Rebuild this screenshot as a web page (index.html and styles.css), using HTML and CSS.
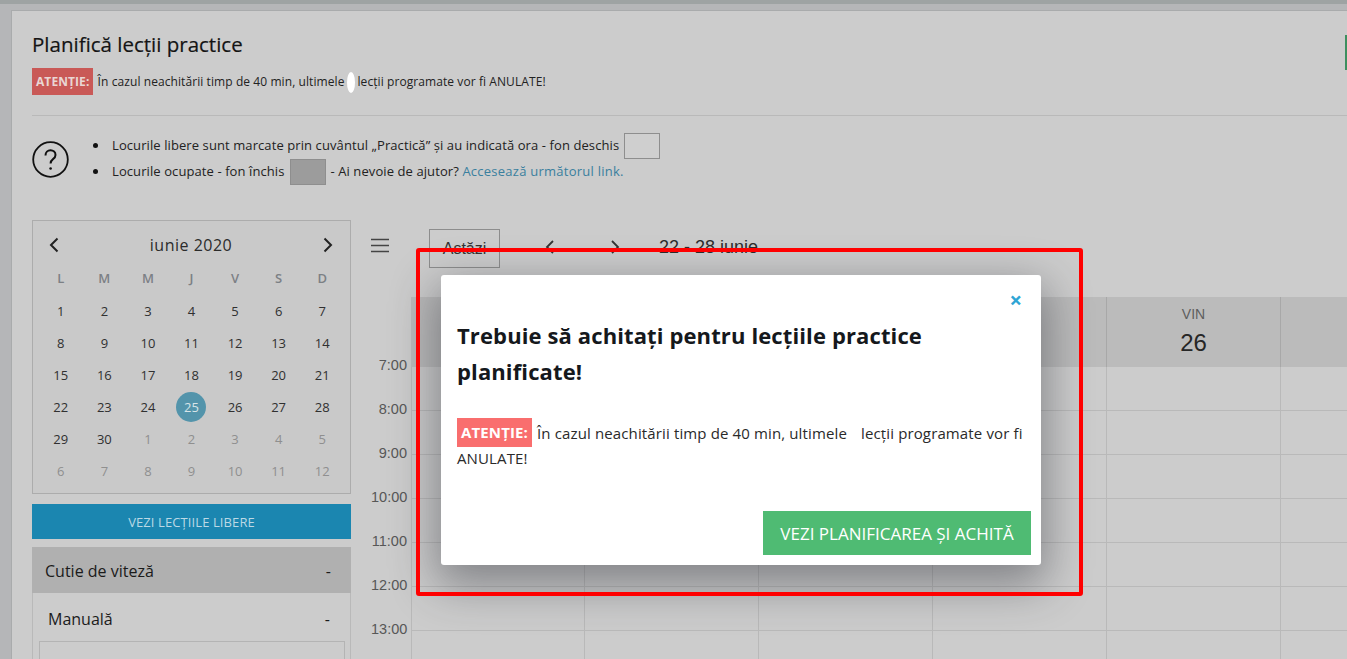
FILE: index.html
```html
<!DOCTYPE html>
<html lang="ro">
<head>
  <meta charset="UTF-8">
  <meta name="viewport" content="width=device-width, initial-scale=1.0">
  <title>Planifică lecții practice</title>
  <link rel="stylesheet" href="styles.css">
</head>
<body>

  <div class="page-card">
    <div class="page-head">
      <h1>Planifică lecții practice</h1>
      <span class="green-flag"></span>
    </div>
    <p class="warning">
      <span class="warning-tag">ATENȚIE:</span>
      În cazul neachitării timp de 40 min, ultimele<span class="blot"></span>lecții programate vor fi ANULATE!
    </p>
    <hr class="divider">

    <div class="help">
      <svg class="help-icon" width="37" height="37" viewBox="0 0 37 37" fill="none" stroke="#111">
        <circle cx="18.5" cy="18.5" r="17.3" stroke-width="1.8"/>
        <path d="M13.5 14.5c0-3.2 2.2-5.2 5-5.2s5 1.9 5 4.6c0 2-1 3.100-2.500 4.200-1.600 1.200-2.400 2.200-2.400 4.400" stroke-width="2"/>
        <circle cx="18.600" cy="27.500" r="1.300" fill="#111" stroke="none"/>
      </svg>
      <ul class="help-list">
        <li>Locurile libere sunt marcate prin cuvântul „Practică” și au indicată ora - fon deschis <span class="swatch"></span></li>
        <li>Locurile ocupate - fon închis <span class="swatch swatch-dark"></span> - Ai nevoie de ajutor? <a href="#">Accesează următorul link.</a></li>
      </ul>
    </div>

    <div class="columns">
      <aside class="sidebar">
        <div class="calendar">
          <div class="calendar-head">
            <svg class="arrow" width="12" height="16" viewBox="0 0 12 16" fill="none" stroke="#222" stroke-width="2"><path d="M9.500 1.500 3 8l6.500 6.500"/></svg>
            <span>iunie 2020</span>
            <svg class="arrow" width="12" height="16" viewBox="0 0 12 16" fill="none" stroke="#222" stroke-width="2"><path d="M2.500 1.500 9 8l-6.500 6.500"/></svg>
          </div>
          <div class="calendar-grid">
            <b>L</b><b>M</b><b>M</b><b>J</b><b>V</b><b>S</b><b>D</b>
            <span>1</span><span>2</span><span>3</span><span>4</span><span>5</span><span>6</span><span>7</span>
            <span>8</span><span>9</span><span>10</span><span>11</span><span>12</span><span>13</span><span>14</span>
            <span>15</span><span>16</span><span>17</span><span>18</span><span>19</span><span>20</span><span>21</span>
            <span>22</span><span>23</span><span>24</span><span class="today">25</span><span>26</span><span>27</span><span>28</span>
            <span>29</span><span>30</span><span class="muted">1</span><span class="muted">2</span><span class="muted">3</span><span class="muted">4</span><span class="muted">5</span>
            <span class="muted">6</span><span class="muted">7</span><span class="muted">8</span><span class="muted">9</span><span class="muted">10</span><span class="muted">11</span><span class="muted">12</span>
          </div>
        </div>
        <button class="free-button">VEZI LECȚIILE LIBERE</button>
        <div class="accordion">
          <div class="accordion-head"><span>Cutie de viteză</span><span>-</span></div>
          <div class="accordion-body">
            <div class="accordion-sub"><span>Manuală</span><span>-</span></div>
            <div class="accordion-box"></div>
          </div>
        </div>
      </aside>

      <main class="schedule">
        <div class="toolbar">
          <svg class="burger" width="18" height="15" viewBox="0 0 18 15" stroke="#444" stroke-width="1.600"><path d="M0 1.500h18M0 7.500h18M0 13.500h18"/></svg>
          <button class="today-button">Astăzi</button>
          <svg class="nav-prev" width="10" height="14" viewBox="0 0 10 14" fill="none" stroke="#333" stroke-width="1.800"><path d="M8 1 2 7l6 6"/></svg>
          <svg class="nav-next" width="10" height="14" viewBox="0 0 10 14" fill="none" stroke="#333" stroke-width="1.800"><path d="m2 1 6 6-6 6"/></svg>
          <span class="week-label">22 - 28 iunie</span>
        </div>

        <div class="week">
          <div class="week-head">
            <div class="day"></div>
            <div class="day"></div>
            <div class="day"></div>
            <div class="day"></div>
            <div class="day"><small>VIN</small><strong>26</strong></div>
            <div class="day"></div>
          </div>
          <div class="hour"><time>7:00</time><div class="slots"><i></i><i></i><i></i><i></i><i></i><i></i></div></div>
          <div class="hour"><time>8:00</time><div class="slots"><i></i><i></i><i></i><i></i><i></i><i></i></div></div>
          <div class="hour"><time>9:00</time><div class="slots"><i></i><i></i><i></i><i></i><i></i><i></i></div></div>
          <div class="hour"><time>10:00</time><div class="slots"><i></i><i></i><i></i><i></i><i></i><i></i></div></div>
          <div class="hour"><time>11:00</time><div class="slots"><i></i><i></i><i></i><i></i><i></i><i></i></div></div>
          <div class="hour"><time>12:00</time><div class="slots"><i></i><i></i><i></i><i></i><i></i><i></i></div></div>
          <div class="hour"><time>13:00</time><div class="slots"><i></i><i></i><i></i><i></i><i></i><i></i></div></div>
        </div>
      </main>
    </div>
  </div>

  <!-- modalul si chenarul rosu stau peste pagina -->
  <div class="modal">
    <span class="modal-close">×</span>
    <h2>Trebuie să achitați pentru lecțiile practice planificate!</h2>
    <p class="modal-text"><span class="modal-tag">ATENȚIE:</span> În cazul neachitării timp de 40 min, ultimele <span class="gap"></span> lecții programate vor fi ANULATE!</p>
    <button class="pay-button">VEZI PLANIFICAREA ȘI ACHITĂ</button>
  </div>
  <div class="red-frame"></div>

</body>
</html>
```

FILE: styles.css
```css
* {
  box-sizing: border-box;
}
html, body {
  height: 100%;
}
body {
  margin: 0;
  overflow: hidden;
  background-color: #b5b6b8;
  border-top: 4px solid #9ea3a3;
  font-family: "Open Sans", sans-serif;
  color: #1b1b1b;
}

/* pagina din spate, acoperita de overlay gri */
.page-card {
  margin: 6px 0 0 11px;
  height: calc(100% - 6px);
  overflow: hidden;
  padding: 19px 0 0 20px;
  background-color: #cccccc;
  border-top: 1px solid #a9abac;
  border-left: 1px solid #a9abac;
}
.page-head {
  display: flex;
  justify-content: space-between;
  height: 28px;
}
h1 {
  margin: 0;
  font-size: 20.500px;
  line-height: 28px;
  font-weight: 400;
  color: #141414;
  -webkit-text-stroke: 0.2px #141414;
}
.green-flag {
  width: 2px;
  height: 35px;
  margin-top: 5px;
  background-color: #3d8f5f;
}
.warning {
  margin: 10px 0 0;
  height: 27px;
  font-size: 12px;
  line-height: 28px;
  letter-spacing: 0.08px;
  color: #222;
}
.warning-tag {
  display: inline-block;
  height: 27px;
  padding: 0 4px;
  margin-right: 1px;
  background-color: #c95957;
  color: #e9d6d4;
  font-weight: 700;
}
.blot {
  display: inline-block;
  width: 8px;
  height: 21px;
  margin: 0 2px 0 3px;
  vertical-align: middle;
  background-color: #fff;
  border-radius: 50%;
}
.divider {
  margin: 20px 0 0;
  border: 0;
  border-top: 1px solid #b9b9b9;
}

.help {
  display: flex;
  align-items: center;
  height: 54px;
  margin-top: 16px;
}
.help-icon {
  flex: none;
}
.help-list {
  margin: 0;
  padding: 0 0 0 43px;
  list-style: none;
  font-size: 13px;
  letter-spacing: 0.09px;
  color: #222;
}
.help-list li {
  position: relative;
  height: 26px;
  line-height: 24px;
}
.help-list li::before {
  content: "";
  position: absolute;
  left: -19px;
  top: 10px;
  width: 5px;
  height: 5px;
  border-radius: 50%;
  background-color: #111;
}
.help-list a {
  color: #3a7f9e;
  letter-spacing: 0.25px;
  text-decoration: none;
}
.swatch {
  display: inline-block;
  width: 36px;
  height: 26px;
  vertical-align: top;
  margin-left: 1px;
  border: 1px solid #8e8e8e;
  background-color: #cfcfcf;
}
.swatch-dark {
  margin: 0 1px 0 2px;
  background-color: #9c9c9c;
}

.columns {
  display: flex;
  margin-top: 34px;
}
.sidebar {
  flex: none;
  width: 319px;
}
.calendar {
  height: 274px;
  padding: 0 1px;
  border: 1px solid #acacac;
  background-color: #c9c9c9;
}
.calendar-head {
  display: flex;
  align-items: center;
  justify-content: space-between;
  height: 47px;
  padding: 0 15px 0 14px;
  font-size: 16px;
  letter-spacing: 0.5px;
  color: #2b2b2b;
}
.calendar-grid {
  display: grid;
  grid-template-columns: repeat(7, 1fr);
  grid-auto-rows: 32px;
  margin-top: -3px;
  padding: 0 5px;
  font-size: 13px;
  color: #303030;
  text-align: center;
}
.calendar-grid b {
  line-height: 26px;
  height: 26px;
  font-weight: 600;
  color: #7c8085;
}
.calendar-grid span {
  display: flex;
  align-items: center;
  justify-content: center;
  width: 30px;
  height: 30px;
  margin: -1px auto 0;
}
.calendar-grid .muted {
  color: #8f8f8f;
}
.calendar-grid .today {
  border-radius: 50%;
  background-color: #5394ab;
  color: #d8e4e8;
}
.free-button {
  display: block;
  width: 100%;
  height: 35px;
  margin-top: 10px;
  border: 0;
  background-color: #1b86b0;
  color: #bcd9e5;
  font-family: inherit;
  font-size: 13px;
  letter-spacing: 0.1px;
}
.accordion {
  margin-top: 8px;
}
.accordion-head {
  display: flex;
  justify-content: space-between;
  height: 46px;
  line-height: 48px;
  padding: 0 20px 0 13px;
  background-color: #b0b0b0;
  font-size: 16px;
}
.accordion-body {
  height: 100px;
  padding: 0 5px 0 6px;
  border: 1px solid #b9b9b9;
  border-top: 0;
}
.accordion-sub {
  display: flex;
  justify-content: space-between;
  height: 48px;
  line-height: 53px;
  padding: 0 15px 0 9px;
  font-size: 16px;
}
.accordion-box {
  height: 60px;
  border: 1px solid #b4b4b4;
}

.schedule {
  flex: 1;
  min-width: 0;
  padding-left: 20px;
  font-family: "Liberation Sans", Arial, sans-serif;
}
.toolbar {
  display: flex;
  align-items: center;
  height: 39px;
  margin-top: 9px;
  color: #2a2a2a;
}
.today-button {
  width: 71px;
  height: 39px;
  margin-left: 40px;
  padding: 0;
  border: 1px solid #8d8d8d;
  background: none;
  font-family: inherit;
  font-size: 16px;
  color: #333;
}
.burger {
  flex: none;
  margin-bottom: 6px;
}
.nav-prev {
  margin-left: 45px;
  margin-bottom: 3px;
}
.nav-next {
  margin-left: 55px;
  margin-bottom: 3px;
}
.week-label {
  margin-left: 39px;
  margin-bottom: 3px;
  font-size: 18px;
  color: #2d2d2d;
}

.week {
  margin-top: 29px;
}
.week-head {
  display: grid;
  grid-template-columns: repeat(6, 174px);
  height: 70px;
  margin-left: 40px;
  background-color: #bbbbbb;
}
.day {
  display: flex;
  flex-direction: column;
  align-items: center;
  padding-top: 9px;
  border-right: 1px solid #a8a8a8;
}
.day small {
  font-size: 14px;
  line-height: 16px;
  color: #5e5e5e;
}
.day strong {
  margin-top: 8px;
  font-size: 24px;
  line-height: 26px;
  font-weight: 400;
  color: #262626;
}
.hour {
  display: flex;
  height: 44px;
}
.hour time {
  flex: none;
  width: 36px;
  margin-right: 4px;
  margin-top: -10px;
  height: 16px;
  font-size: 14.500px;
  line-height: 16px;
  text-align: right;
  color: #575757;
}
.slots {
  display: grid;
  grid-template-columns: 173px repeat(5, 174px);
  flex: none;
  border-left: 1px solid #b9b9b9;
  border-bottom: 1px solid #b9b9b9;
}
.slots i {
  border-right: 1px solid #b9b9b9;
}

.modal {
  position: absolute;
  left: 441px;
  top: 275px;
  width: 600px;
  height: 290px;
  padding: 42px 10px 0 16px;
  background-color: #fff;
  border-radius: 3px;
  box-shadow: 0 15px 45px 5px rgba(40, 42, 50, 0.45);
}
.modal-close {
  position: absolute;
  top: 13px;
  right: 19px;
  font-size: 22px;
  line-height: 22px;
  font-weight: 700;
  color: #2ea5d5;
}
.modal h2 {
  margin: 0;
  font-size: 22px;
  line-height: 36px;
  font-weight: 700;
  color: #15181c;
  letter-spacing: 0.12px;
}
.modal-text {
  margin: 32px 0 0;
  width: 575px;
  font-size: 15px;
  line-height: 25px;
  letter-spacing: 0.13px;
  color: #2a2a2a;
}
.modal-tag {
  display: inline-block;
  height: 29px;
  padding: 0 4px;
  margin: -3px 1px -1px 0;
  line-height: 29px;
  vertical-align: top;
  background-color: #f96e6e;
  color: #fff;
  font-weight: 700;
}
.gap {
  display: inline-block;
  width: 6px;
}
.pay-button {
  position: absolute;
  right: 10px;
  bottom: 10px;
  width: 268px;
  height: 44px;
  border: 0;
  background-color: #4fbb73;
  color: #fff;
  font-family: inherit;
  font-size: 17px;
}
.red-frame {
  position: absolute;
  left: 416px;
  top: 248px;
  width: 667px;
  height: 348px;
  border: 4px solid #f00;
  border-radius: 3px;
  pointer-events: none;
}
```
